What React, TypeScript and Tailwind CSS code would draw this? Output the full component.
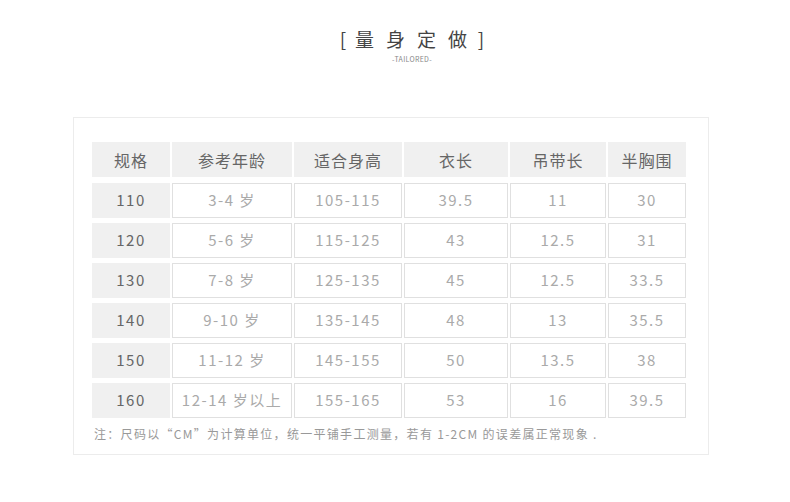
const font = { fontFamily: '"Noto Sans CJK SC", "Noto Sans", sans-serif' };

const headers = ['规格', '参考年龄', '适合身高', '衣长', '吊带长', '半胸围'];
const widths = ['w-[78px]', 'w-[120px]', 'w-[108px]', 'w-[104px]', 'w-[96px]', 'w-[78px]'];

const rows = [
  ['110', '3-4 岁', '105-115', '39.5', '11', '30'],
  ['120', '5-6 岁', '115-125', '43', '12.5', '31'],
  ['130', '7-8 岁', '125-135', '45', '12.5', '33.5'],
  ['140', '9-10 岁', '135-145', '48', '13', '35.5'],
  ['150', '11-12 岁', '145-155', '50', '13.5', '38'],
  ['160', '12-14 岁以上', '155-165', '53', '16', '39.5'],
];

export default function App() {
  return (
    <div className="w-[790px] h-[502px] bg-white flex flex-col" style={font}>
      <div className="mt-[26px] ml-[340px] w-[144px] flex flex-col items-center">
        <div className="flex text-[19px] leading-[26px] text-[#444]">
          <span className="w-[6px] flex justify-center">[</span>
          <div className="ml-[9px] flex gap-[13px]">
            {['量', '身', '定', '做'].map((c) => (
              <span key={c} className="w-[18px] text-center">{c}</span>
            ))}
          </div>
          <span className="ml-[12px] w-[6px] flex justify-center">]</span>
        </div>
        <div className="text-[7px] leading-[10px] text-[#888] mt-[2px] tracking-[0.3px]">-TAILORED-</div>
      </div>

      <div className="mt-[53px] ml-[73px] w-[636px] h-[338px] border border-[#ececec] pt-[24px] pl-[18px]">
        <div className="flex gap-[2px]">
          {headers.map((h, i) => (
            <div
              key={h}
              className={`${widths[i]} h-[35px] bg-[#f0f0f0] flex items-center justify-center text-[16px] tracking-[1px] text-[#666]`}
            >
              {h}
            </div>
          ))}
        </div>

        <div className="flex flex-col gap-[5px] mt-[6px]">
          {rows.map((r) => (
            <div key={r[0]} className="flex gap-[2px]">
              {r.map((c, i) =>
                i === 0 ? (
                  <div
                    key={i}
                    className={`${widths[i]} h-[35px] bg-[#f0f0f0] flex items-center justify-center text-[15px] tracking-[1.5px] text-[#666]`}
                  >
                    {c}
                  </div>
                ) : (
                  <div
                    key={i}
                    className={`${widths[i]} h-[35px] border border-[#e0e0e0] bg-white flex items-center justify-center text-[15px] tracking-[1.5px] text-[#aaa]`}
                  >
                    {c}
                  </div>
                )
              )}
            </div>
          ))}
        </div>

        <div className="mt-[7px] pl-[2px] text-[12px] leading-[18px] text-[#999] tracking-[1.3px]">
          注：尺码以“CM”为计算单位，统一平铺手工测量，若有 1-2CM 的误差属正常现象 .
        </div>
      </div>
    </div>
  );
}
